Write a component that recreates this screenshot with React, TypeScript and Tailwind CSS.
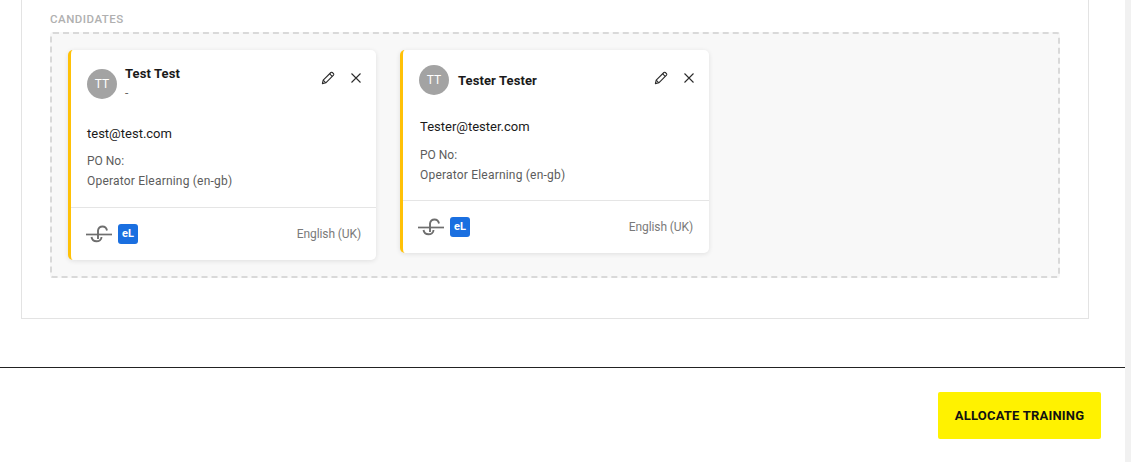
import React from "react";

function PencilIcon() {
  return (
    <svg width="14" height="14" viewBox="0 0 14 14" fill="none" stroke="#2b2b2b" strokeWidth="1.1" strokeLinejoin="round">
      <path d="M1.4 12.6 L2.2 9.2 L9.9 1.5 Q10.6 0.9 11.3 1.5 L12.5 2.7 Q13.1 3.4 12.5 4.1 L4.8 11.8 Z" />
      <path d="M8.7 2.8 L11.2 5.3" />
      <path d="M2.2 9.2 L4.8 11.8" />
    </svg>
  );
}

function CloseIcon() {
  return (
    <svg width="12" height="12" viewBox="0 0 12 12" fill="none" stroke="#2b2b2b" strokeWidth="1.1">
      <path d="M1.5 1.5 L10.5 10.5 M10.5 1.5 L1.5 10.5" />
    </svg>
  );
}

function LinkIcon() {
  return (
    <svg width="26" height="20" viewBox="0 0 26 20" fill="none" stroke="#6e6e6e" strokeWidth="1.9">
      <path d="M12 15 V6.5 C12.5 3.5 14.5 2.5 16.5 2.5 C18.5 2.5 20.5 4 21 6.5" />
      <path d="M5.5 13 C6 15.8 8 17.3 10.5 17.3 C13 17.3 15.5 15.8 15.5 13" />
      <path d="M0 10.5 H26" strokeWidth="1.7" />
    </svg>
  );
}

type CardProps = { name: string; sub?: string; email: string };

function CandidateCard({ name, sub, email }: CardProps) {
  return (
    <div className={`shrink-0 rounded-[5px] bg-white border-l-[3px] border-[#ffc107] shadow-[0_1px_5px_rgba(0,0,0,0.1)] ${sub ? "w-[308px]" : "w-[309px]"}`}>
      <div className={`flex justify-between pl-4 pr-[14px] ${sub ? "h-[67px] pt-[19px]" : "h-[60px] pt-[15px]"}`}>
        <div className={`flex ${sub ? "items-start" : "items-center h-[30px]"}`}>
          <div className="flex h-[30px] w-[30px] items-center justify-center rounded-full bg-[#a3a3a3] text-[12px] text-white">TT</div>
          <div className={sub ? "ml-2 -mt-[4px]" : "ml-[9px]"}>
            <div className="text-[13px] leading-[17px] font-bold text-[#1a1a1a] tracking-[0.1px]">{name}</div>
            {sub && <div className="mt-[3px] text-[12px] leading-[16px] text-[#666666]">{sub}</div>}
          </div>
        </div>
        <div className={`flex h-[18px] items-center gap-[15px] ${sub ? "" : "mt-[4px]"}`}>
          <PencilIcon />
          <CloseIcon />
        </div>
      </div>
      <div className={`pt-2 h-[81px] ${sub ? "pl-4" : "pl-[17px]"}`}>
        <div className="text-[13px] leading-[18px] text-[#1a1a1a]">{email}</div>
        <div className={`text-[12px] leading-[20px] text-[#5c5c5c] ${sub ? "mt-2" : "mt-[9px]"}`}>PO No:</div>
        <div className="text-[12px] leading-[20px] tracking-[0.2px] text-[#5c5c5c]">Operator Elearning (en-gb)</div>
      </div>
      <div className={`mt-[9px] flex h-[53px] items-center justify-between border-t border-[#e5e5e5] pl-[15px] ${sub ? "pr-[15px]" : "pr-4"}`}>
        <div className="flex items-center gap-[6px]">
          <LinkIcon />
          <div className="flex h-5 w-5 items-center justify-center rounded-[3px] bg-[#1a6fe0] text-[11px] font-bold text-white">eL</div>
        </div>
        <div className="text-[12px] tracking-[-0.1px] text-[#7a7a7a]">English (UK)</div>
      </div>
    </div>
  );
}

export default function App() {
  return (
    <div className="flex h-[462px] w-full overflow-hidden bg-white font-['Roboto',sans-serif]">
      <div className="min-w-0 flex-1">
        <div className="ml-[21px] mr-[36px] h-[319px] border-x border-b border-[#e3e3e3] pl-7 pr-7 pt-3">
          <div className="text-[11.5px] leading-[14px] h-[14px] font-medium tracking-[0.5px] text-[#b0b0b0]">CANDIDATES</div>
          <div className="mt-[6px] flex h-[246px] items-start gap-6 rounded-[3px] border-2 border-dashed border-[#d9d9d9] bg-[#f8f8f8] pl-4 pt-4">
            <CandidateCard name="Test Test" sub="-" email="test@test.com" />
            <CandidateCard name="Tester Tester" email="Tester@tester.com" />
          </div>
        </div>
        <div className="mt-[48px] flex h-[95px] justify-end border-t border-[#222222] pt-6 pr-6">
          <button className="h-[47px] w-[163px] rounded-[2px] bg-[#fff200] text-[13px] font-bold tracking-[0.2px] text-[#111111]">
            ALLOCATE TRAINING
          </button>
        </div>
      </div>
      <div className="w-[6px] shrink-0 bg-[#f1f1f1]" />
    </div>
  );
}
